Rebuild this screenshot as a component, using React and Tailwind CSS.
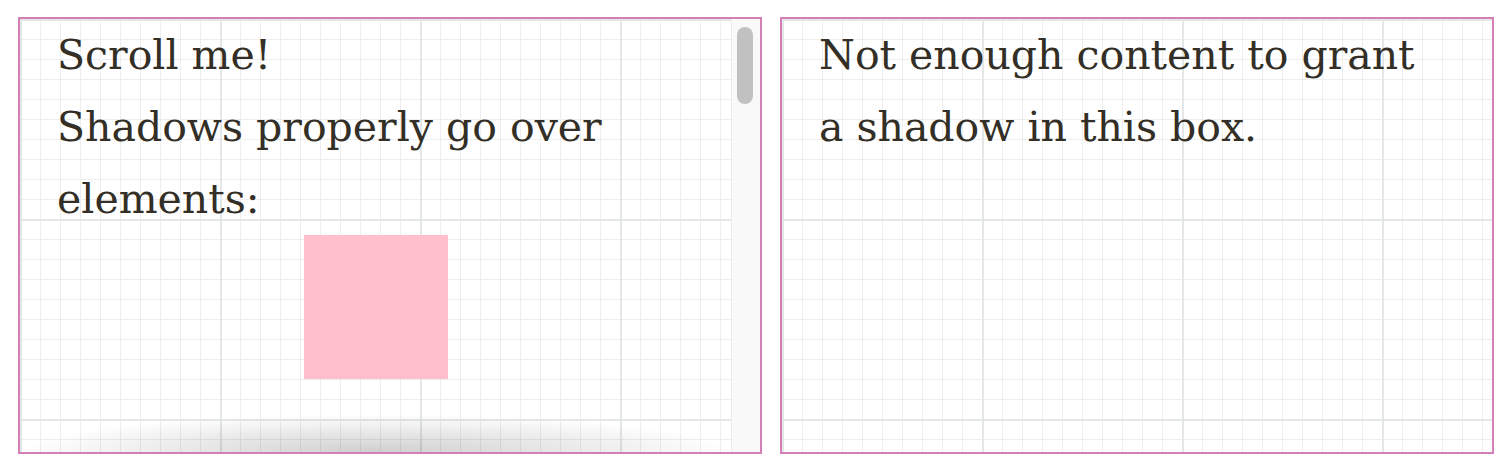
import React from 'react';

// grid paper: major lines every 200px, minor every 20px
const gridBg =
  "[background-image:linear-gradient(90deg,#e3e7e7_2px,transparent_2px),linear-gradient(#e3e7e7_2px,transparent_2px),linear-gradient(90deg,#eeeeee_1px,transparent_1px),linear-gradient(#eeeeee_1px,transparent_1px)] [background-size:200px_200px,200px_200px,20px_20px,20px_20px]";

const ScrollBox = () => (
    <div className="flex w-[744px] h-[437px] border-2 border-[#d47fb5] shrink-0">
        <div className="relative flex-1 min-w-0">
            <div className={`h-full overflow-y-auto [scrollbar-width:none] ${gridBg}`}>
                <div className="px-[37px]">
                    <p>Scroll me!</p>
                    <p>Shadows properly go over elements:</p>
                    <div className="mx-auto w-[144px] h-[144px] bg-[#ffc0cb]" />
                    <div className="h-[1500px]" />
                </div>
            </div>
            {/* bottom scroll shadow, drawn over the content */}
            <div className="pointer-events-none absolute bottom-0 left-0 right-0 h-[38px] bg-[radial-gradient(farthest-side_at_50%_100%,rgba(0,0,0,0.19),rgba(0,0,0,0))]" />
        </div>
        {/* scrollbar track + thumb */}
        <div className="w-[29px] shrink-0 bg-[#f9f9f9] border-l border-[#ececec] pt-[8px] pl-[5px] pr-[7px]">
            <div className="h-[77px] w-[16px] rounded-full bg-[#c1c1c1]" />
        </div>
    </div>
);

const StaticBox = () => (
    <div className={`w-[714px] h-[437px] border-2 border-[#d47fb5] shrink-0 overflow-hidden px-[37px] ${gridBg}`}>
        <p>
            Not enough content to grant
            <br />
            a shadow in this box.
        </p>
    </div>
);

export default function App() {
    return (
        <div className="flex gap-[18px] px-[18px] pt-[17px] pb-[18px] bg-white min-h-screen font-['DejaVu_Serif',serif] text-[41px] leading-[72px] text-[#332f26]">
            <ScrollBox />
            <StaticBox />
        </div>
    );
}
